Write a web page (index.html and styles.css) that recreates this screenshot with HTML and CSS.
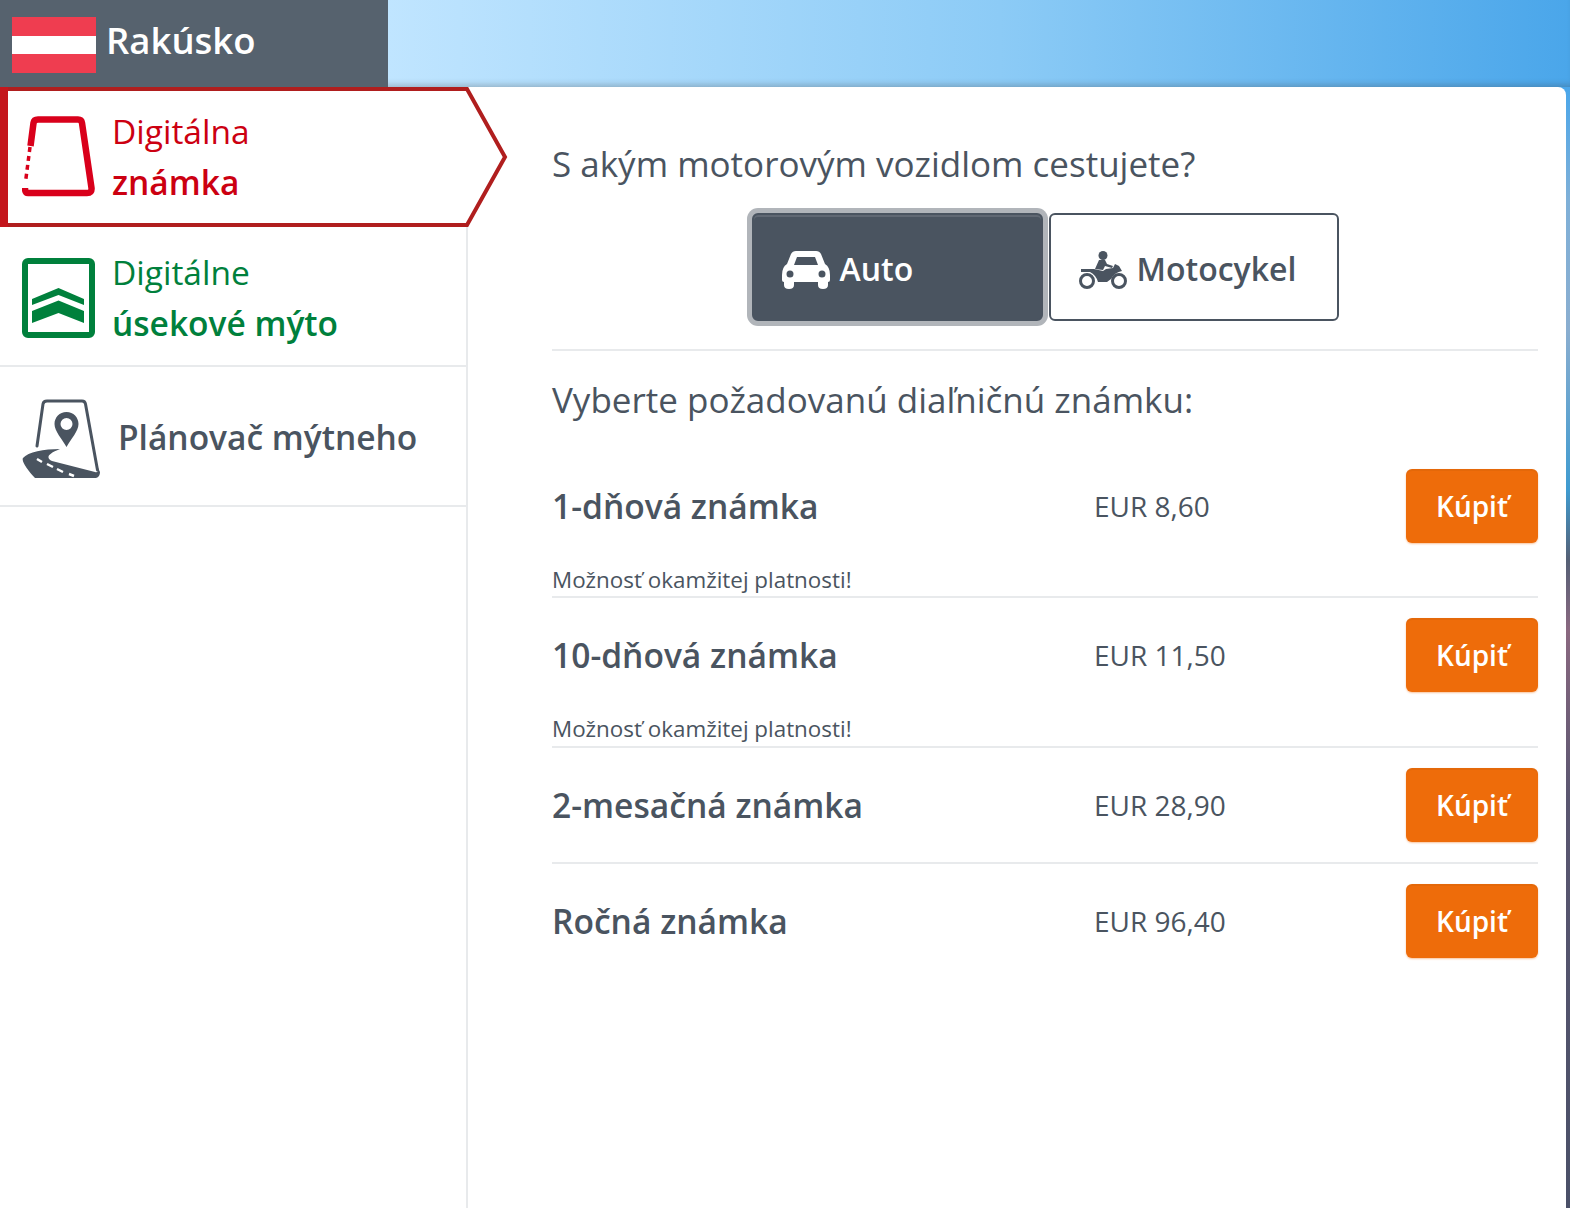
FILE: index.html
```html
<!DOCTYPE html>
<html lang="sk">
<head>
    <meta charset="UTF-8">
    <title>Rakúsko</title>
    <link rel="stylesheet" href="styles.css">
</head>
<body>
    <header class="topbar">
        <div class="country">
            <div class="flag"><span></span><span class="flag-white"></span><span></span></div>
            <h1>Rakúsko</h1>
        </div>
    </header>

    <div class="panel">
        <nav class="sidebar">
            <a class="nav-item nav-active">
                <svg class="nav-outline" viewBox="0 0 508 141" width="508" height="141">
                    <path d="M2 2H467L505 70L467 138H2Z" fill="#fff" stroke="#b01e1e" stroke-width="4"/>
                    <rect x="0" y="0" width="8" height="140" fill="#c4161c"/>
                </svg>
                <svg class="nav-icon" viewBox="0 0 74 82" width="74" height="82">
                    <path d="M8.500 30L11.500 7Q12 3.500 16 3.500H56Q59.500 3.500 60 7L69.500 72Q70 77 65 77H6Q3 77 3 72" fill="none" stroke="#d9001b" stroke-width="6.500" stroke-linejoin="round"/>
                    <path d="M8 31L3.500 66" fill="none" stroke="#d9001b" stroke-width="3.500" stroke-dasharray="5 4"/>
                </svg>
                <span class="nav-text nav-red">Digitálna<b>známka</b></span>
            </a>
            <a class="nav-item nav-next">
                <svg class="nav-icon" viewBox="0 0 74 82" width="74" height="82">
                    <rect x="3" y="3" width="67" height="74" rx="3" fill="#fff" stroke="#00803c" stroke-width="6"/>
                    <path d="M10 41L36.500 30L62 41V47L36.500 37L10 47Z" fill="#00803c"/>
                    <path d="M10 53L36.500 42.500L62 53V65L36.500 55L10 65Z" fill="#00803c"/>
                </svg>
                <span class="nav-text nav-green">Digitálne<b>úsekové mýto</b></span>
            </a>
            <a class="nav-item nav-next">
                <svg class="nav-icon-wide" viewBox="0 0 80 82" width="80" height="82">
                    <path d="M15 48L21 6Q21.600 3 25 3H60Q63 3 63.500 6L75.500 72" fill="none" stroke="#4a5460" stroke-width="3" stroke-linecap="round"/>
                    <path d="M44.500 14C37.500 14 32.500 19.500 32.500 26C32.500 33 40 41 44.500 49C49 41 56.500 33 56.500 26C56.500 19.500 51.500 14 44.500 14ZM44.500 20A6 6 0 1 1 44.500 32A6 6 0 1 1 44.500 20Z" fill="#4a5460" fill-rule="evenodd"/>
                    <path d="M38 51C22 51 6 54 1 60C-1 63 6 73 13 80H74Q78 79 78 74L76 70V72Q76 75 73 74L30 63C24 60 25 56 38 51Z" fill="#4a5460"/>
                    <path d="M15 61L20 64M25 66L31 69M35 71L41 74M47 76L52 78" stroke="#fff" stroke-width="2.500" fill="none"/>
                </svg>
                <span class="nav-label">Plánovač mýtneho</span>
            </a>
        </nav>

        <main class="content">
            <h2 class="question">S akým motorovým vozidlom cestujete?</h2>
            <div class="vehicle-switch">
                <button class="vehicle vehicle-active">
                    <svg viewBox="0 0 48 38" width="48" height="38">
                        <path d="M14 0H34Q37.500 0 39 3L43 13Q48 16 48 24V29Q48 31 46 31V34Q46 38 41 38T36 34V31H12V34Q12 38 7 38T2 34V31Q0 31 0 29V24Q0 16 5 13L9 3Q10.500 0 14 0ZM15 6L12 14H36L33 6ZM8 19.500A3.500 3.500 0 1 0 8 26.500A3.500 3.500 0 1 0 8 19.500ZM40 19.500A3.500 3.500 0 1 0 40 26.500A3.500 3.500 0 1 0 40 19.500Z" fill="#fff" fill-rule="evenodd"/>
                    </svg>
                    Auto
                </button>
                <button class="vehicle vehicle-moto">
                    <svg viewBox="0 0 48 38" width="48" height="38">
                        <circle cx="8" cy="30" r="6.500" fill="none" stroke="#4a5460" stroke-width="3"/>
                        <circle cx="40" cy="30" r="6.500" fill="none" stroke="#4a5460" stroke-width="3"/>
                        <circle cx="24" cy="4.500" r="4.500" fill="#4a5460"/>
                        <path d="M20 9H26L28 13L34 15L33 17L26 15L24 19L16 18Z" fill="#4a5460"/>
                        <path d="M2 18H15L24 20L27 18L34 17L36 13L40 15L43 20Q36 21 32 28L28 31H19Q17 24 11 21H2Z" fill="#4a5460"/>
                    </svg>
                    Motocykel
                </button>
            </div>

            <h2 class="question choose">Vyberte požadovanú diaľničnú známku:</h2>

            <div class="vignette vignette-first">
                <span class="vignette-name">1-dňová známka</span>
                <span class="vignette-price">EUR 8,60</span>
                <button class="buy">Kúpiť</button>
                <p class="vignette-note">Možnosť okamžitej platnosti!</p>
            </div>
            <div class="vignette">
                <span class="vignette-name">10-dňová známka</span>
                <span class="vignette-price">EUR 11,50</span>
                <button class="buy">Kúpiť</button>
                <p class="vignette-note">Možnosť okamžitej platnosti!</p>
            </div>
            <div class="vignette">
                <span class="vignette-name">2-mesačná známka</span>
                <span class="vignette-price">EUR 28,90</span>
                <button class="buy">Kúpiť</button>
            </div>
            <div class="vignette vignette-last">
                <span class="vignette-name">Ročná známka</span>
                <span class="vignette-price">EUR 96,40</span>
                <button class="buy">Kúpiť</button>
            </div>
        </main>
    </div>
</body>
</html>
```

FILE: styles.css
```css
* {
    box-sizing: border-box;
}

html, body {
    height: 100%;
}

body {
    margin: 0;
    font-family: 'Open Sans', sans-serif;
    color: #4a5460;
    overflow: hidden;
    background: linear-gradient(to bottom, #4aa6ea 87px, #7fb0d8 200px, #8aaed0 330px, #3f9bd0 490px, #556075 560px, #8a6880 630px, #5a5670 800px, #4a5068 1208px);
}

.topbar {
    height: 87px;
    background: linear-gradient(to right, #c0e5ff 388px, #8ccbf6 1000px, #4aa6ea 1570px);
    box-shadow: inset 0 -6px 6px -4px rgba(60, 60, 60, 0.3);
}

.country {
    width: 388px;
    height: 87px;
    background: #56626e;
    display: flex;
    align-items: center;
    padding: 0 0 7px 12px;
    gap: 10px;
}

.country h1 {
    margin: 0;
    font-size: 36.500px;
    font-weight: 600;
    color: #fff;
}

.flag {
    width: 84px;
    height: 56px;
    margin-top: 10px;
    display: flex;
    flex-direction: column;
}

.flag span {
    flex: 1;
    background: #ef3d50;
}

.flag .flag-white {
    background: #fff;
}

.panel {
    width: 1566px;
    height: 1121px;
    background: #fff;
    border-top-right-radius: 8px;
    display: flex;
}

.sidebar {
    width: 468px;
    flex-shrink: 0;
    border-right: 2px solid #e8eaec;
}

.nav-item {
    height: 140px;
    display: flex;
    align-items: center;
    padding-left: 22px;
    border-bottom: 2px solid #e8eaec;
    position: relative;
}

.nav-active {
    border-bottom: 0;
    margin-right: -2px;
}

.nav-next {
    padding-top: 5px;
}

.nav-next .nav-text {
    margin-bottom: 2px;
}

.nav-outline {
    position: absolute;
    top: 0;
    left: 0;
}

.nav-icon,
.nav-icon-wide {
    flex-shrink: 0;
    position: relative;
}

.nav-text {
    margin-left: 16px;
    font-size: 33.500px;
    line-height: 51px;
    position: relative;
}

.nav-text b {
    display: block;
    font-weight: 600;
}

.nav-red {
    color: #cc0011;
}

.nav-green {
    color: #00803c;
}

.nav-label {
    margin-left: 16px;
    margin-bottom: 3px;
    font-size: 33.500px;
    font-weight: 600;
}

.content {
    flex: 1;
    padding: 0 28px 0 84px;
}

.question {
    margin: 0;
    font-size: 35px;
    font-weight: 400;
}

.content > .question:first-child {
    padding-top: 53px;
}

.vehicle-switch {
    display: flex;
    justify-content: center;
    gap: 6px;
    margin-top: 26px;
    padding-bottom: 28px;
    border-bottom: 2px solid #e8eaec;
}

.vehicle {
    width: 290px;
    height: 108px;
    display: flex;
    align-items: center;
    gap: 9px;
    padding: 2px 28px 0;
    font-family: inherit;
    font-size: 32px;
    font-weight: 600;
    color: #4a5460;
    background: #fff;
    border: 2px solid #4a5460;
    border-radius: 6px;
}

.vehicle svg {
    margin-top: 4px;
    flex-shrink: 0;
}

.vehicle-active {
    width: 291px;
    gap: 10px;
    background: #4a5460;
    color: #fff;
    box-shadow: inset 0 2px 0 rgba(255, 255, 255, 0.12), 0 0 0 5px #b1b5ba;
}

.vehicle-moto {
    gap: 10px;
}

.choose {
    margin-top: 25px;
    margin-bottom: 26px;
}

.vignette {
    display: grid;
    grid-template-columns: 542px 1fr 132px;
    align-items: center;
    padding-top: 20px;
    padding-bottom: 20px;
    border-bottom: 2px solid #e8eaec;
}

.vignette-last {
    border-bottom: 0;
}

.vignette-name {
    font-size: 33.600px;
    font-weight: 600;
}

.vignette-price {
    font-size: 28px;
}

.buy {
    height: 74px;
    font-family: inherit;
    font-size: 28px;
    font-weight: 600;
    color: #fff;
    background: #ee6c0a;
    border: 0;
    border-radius: 6px;
    box-shadow: inset 0 2px 0 rgba(120, 60, 0, 0.08), 0 1px 2px rgba(239, 108, 10, 0.4);
}

.vignette-note {
    grid-column: 1 / -1;
    margin: 20px 0 -19px;
    font-size: 22.400px;
    line-height: 33px;
}

.vignette-first .vignette-note {
    margin-bottom: -20px;
}
```
